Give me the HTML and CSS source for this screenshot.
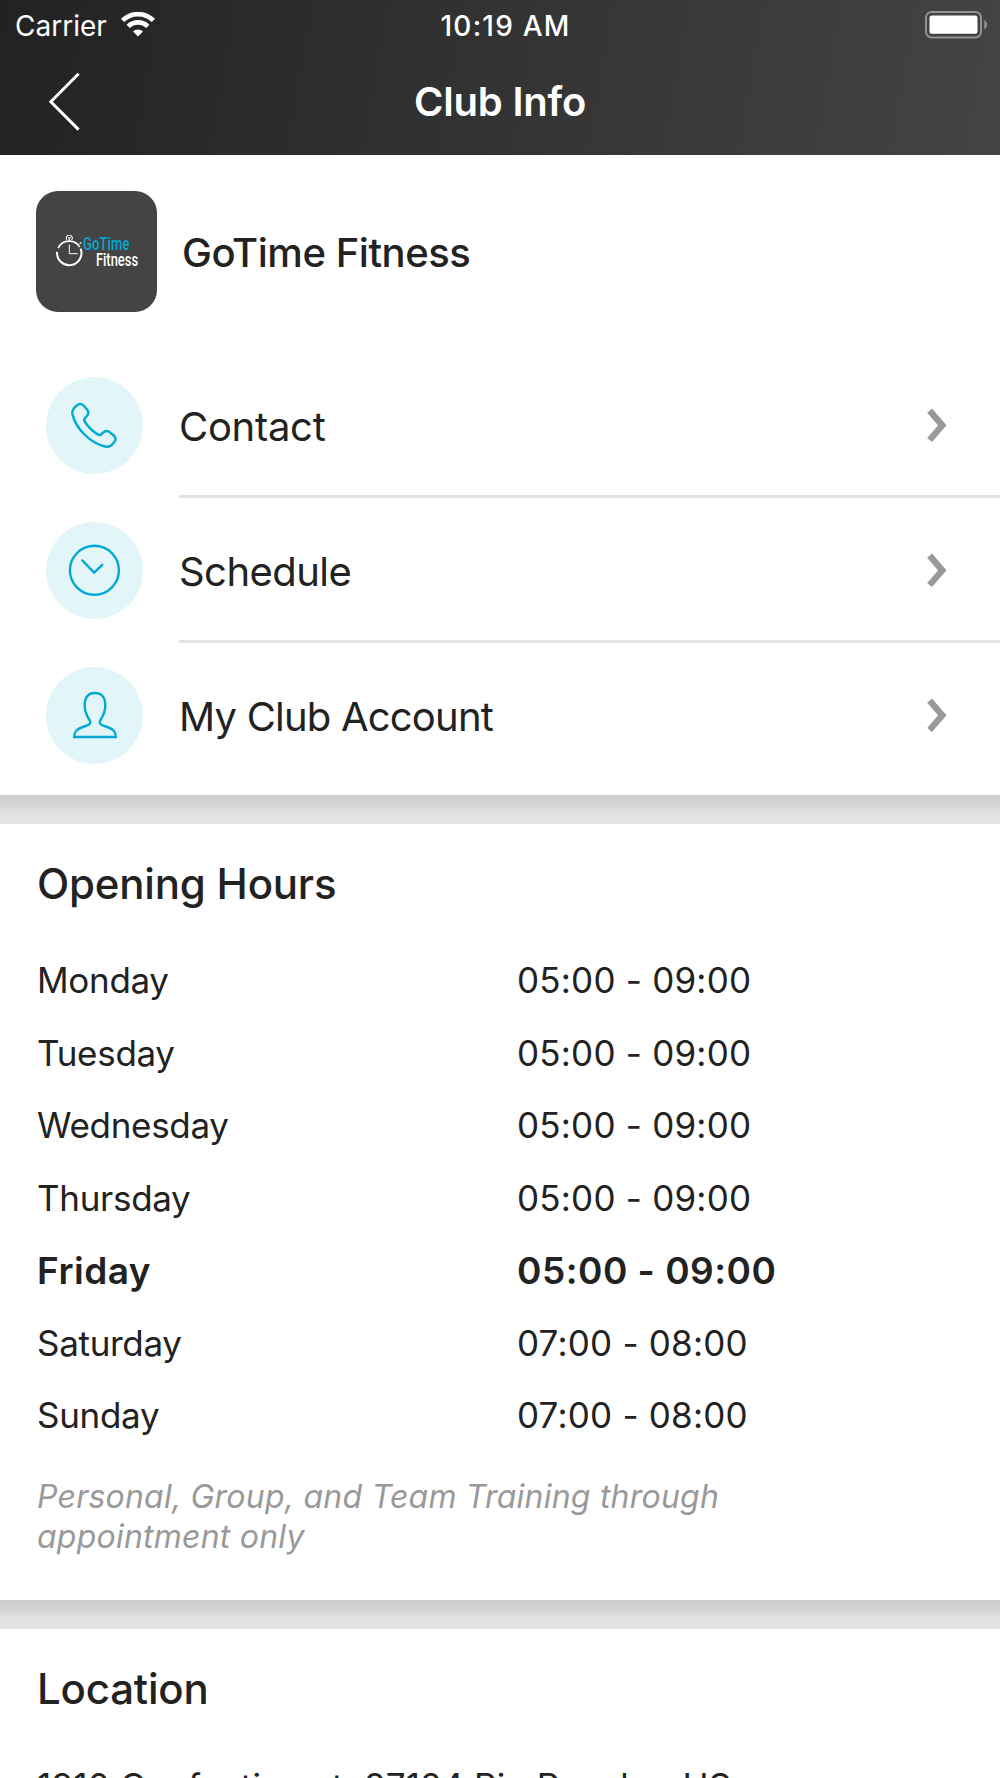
FILE: index.html
```html
<!DOCTYPE html>
<html lang="en">
<head>
  <meta charset="UTF-8">
  <meta name="viewport" content="width=device-width, initial-scale=1.0">
  <title>Club Info</title>
  <link rel="stylesheet" href="styles.css">
</head>
<body>
  <header class="header">
    <div class="status-bar">
      <div class="carrier">
        <span class="carrier-name">Carrier</span>
        <svg class="wifi" width="34" height="25" viewBox="0 0 34 25" fill="none" stroke="#fff">
          <path d="M1.6 8.4a22 22 0 0 1 30.8 0" stroke-width="4.6"/>
          <path d="M7.2 14.4a14 14 0 0 1 19.6 0" stroke-width="4.6"/>
          <path d="M17 24.6l-5-5.2a7.2 7.2 0 0 1 10 0z" fill="#fff" stroke="none"/>
        </svg>
      </div>
      <div class="time">10:19 AM</div>
      <svg class="battery" width="64" height="28" viewBox="0 0 64 28">
        <rect x="1" y="1" width="55" height="25.4" rx="5.5" fill="none" stroke="#929292" stroke-width="2"/>
        <rect x="4.5" y="4.4" width="48" height="18.4" rx="2.6" fill="#fff"/>
        <path d="M59.3 8.8a5.8 5.8 0 0 1 0 9.8z" fill="#929292"/>
      </svg>
    </div>
    <div class="nav-bar">
      <a class="back" href="#" aria-label="Back">
        <svg width="32" height="60" viewBox="0 0 32 60" fill="none" stroke="#fff" stroke-width="3">
          <path d="M29.6 1.8L1.8 29.7l27.8 27.9"/>
        </svg>
      </a>
      <h1>Club Info</h1>
    </div>
  </header>

  <section class="card club">
    <div class="club-head">
      <div class="logo">
        <svg class="stopwatch" width="28" height="33" viewBox="0 0 28 33" fill="none" stroke="#fff">
          <path d="M3.2 13.1A12.2 12.2 0 0 1 24.7 12" stroke-width="1.6"/>
          <path d="M25.6 13.6A12.2 12.2 0 1 1 2.1 16.8" stroke-width="2"/>
          <path d="M14.3 9.5v9.2h8.5" stroke-width="1"/>
          <path d="M12 4.8a2.9 2.9 0 1 1 4.6 0M13 2.8h2.6M14.3 3v3M24.6 9l1.8-1.6" stroke-width="1.1"/>
        </svg>
        <div class="logo-text">
          <span class="logo-top">GoTime</span>
          <span class="logo-bottom">Fitness</span>
        </div>
      </div>
      <h2 class="club-name">GoTime Fitness</h2>
    </div>

    <ul class="menu">
      <li class="menu-item">
        <span class="menu-icon">
          <svg width="56" height="56" viewBox="-0.4 -2 56 56">
            <path d="M6.6 8.2l2.6-2.5c2.2-2.2 5.4-2.2 7.4.2l3 3.7c1.9 2.3 1.7 4.6-.2 6.6l-1.6 1.6c-1.3 1.3-1.3 2.5-.2 4.2 3.1 4.7 7.6 9.2 12.7 12.4 1.5.9 2.7.7 3.9-.4l1.5-1.4c2.1-1.900 4.600-2.100 6.900-.2l3.700 3.100c2.300 1.900 2.400 4.900.3 7l-2.500 2.600c-1.700 1.700-3.800 2-6.400 1.400C22.700 43.100 8.500 28.400 5.200 14.900c-.7-2.800-.3-4.800 1.400-6.700z"/>
          </svg>
        </span>
        <span class="menu-label contact">Contact</span>
        <svg class="chevron" width="20" height="35" viewBox="0 0 20 35"><path d="M2.600 2.600l12.700 14.700L2.600 32"/></svg>
      </li>
      <li class="menu-item">
        <span class="menu-icon">
          <svg width="56" height="56" viewBox="0 0 56 56">
            <circle cx="27.400" cy="27.300" r="24.500"/>
            <path d="M15.300 17.400l11.800 12.200 8.200-7.800" stroke-linecap="round"/>
          </svg>
        </span>
        <span class="menu-label schedule">Schedule</span>
        <svg class="chevron" width="20" height="35" viewBox="0 0 20 35"><path d="M2.600 2.600l12.700 14.700L2.600 32"/></svg>
      </li>
      <li class="menu-item">
        <span class="menu-icon">
          <svg width="56" height="56" viewBox="0.6 1 56 56">
            <path d="M7.800 50h41.600c0-5.200-1.900-7.500-7.300-9.500l-5.700-2.100c-3.300-1.300-3.900-3.100-2.300-5.400 3-4.500 4.800-8.900 4.800-14.500 0-8.200-3.500-12.500-10.300-12.500s-10.300 4.300-10.300 12.500c0 5.600 1.800 10 4.800 14.500 1.600 2.300 1 4.100-2.300 5.400l-5.700 2.100C9.700 42.500 7.800 44.800 7.800 50z"/>
          </svg>
        </span>
        <span class="menu-label account">My Club Account</span>
        <svg class="chevron" width="20" height="35" viewBox="0 0 20 35"><path d="M2.600 2.600l12.700 14.700L2.600 32"/></svg>
      </li>
    </ul>
  </section>

  <div class="divider"></div>

  <section class="card hours">
    <h2 class="section-title">Opening Hours</h2>
    <dl class="hours-list">
      <dt>Monday</dt><dd>05:00 - 09:00</dd>
      <dt>Tuesday</dt><dd>05:00 - 09:00</dd>
      <dt>Wednesday</dt><dd>05:00 - 09:00</dd>
      <dt>Thursday</dt><dd>05:00 - 09:00</dd>
      <dt class="today">Friday</dt><dd class="today">05:00 - 09:00</dd>
      <dt>Saturday</dt><dd>07:00 - 08:00</dd>
      <dt>Sunday</dt><dd>07:00 - 08:00</dd>
    </dl>
    <p class="note">Personal, Group, and Team Training through appointment only</p>
  </section>

  <div class="divider"></div>

  <section class="card location">
    <h2 class="section-title">Location</h2>
    <p class="address">1910 Confection st, 87124 Rio Rancho, US</p>
  </section>
</body>
</html>
```

FILE: styles.css
```css
* {
  box-sizing: border-box;
  margin: 0;
  padding: 0;
}

body {
  width: 1000px;
  height: 1778px;
  overflow: hidden;
  font-family: 'Inter', 'Liberation Sans', sans-serif;
  background: #fff;
  color: #222;
}

/* Header */
.header {
  height: 155px;
  background: linear-gradient(100deg, #222 0%, #444 100%);
  color: #fff;
}

.status-bar {
  display: grid;
  grid-template-columns: 1fr auto 1fr;
  align-items: center;
  height: 50px;
  padding: 1px 11px 0 15px;
  font-size: 28px;
}

.carrier {
  display: flex;
  align-items: center;
  gap: 14px;
}

.wifi {
  margin-bottom: 3px;
}

.time {
  padding-left: 7px;
  font-weight: 500;
  letter-spacing: 1.2px;
}

.battery {
  justify-self: end;
  margin-bottom: 1px;
}

.nav-bar {
  display: grid;
  grid-template-columns: 120px 1fr 120px;
  align-items: center;
  height: 103px;
}

.back {
  display: flex;
  padding-left: 49px;
}

h1 {
  text-align: center;
  font-size: 40px;
  font-weight: 600;
  letter-spacing: -0.2px;
}

/* Cards */
.card {
  background: #fff;
}

.divider {
  height: 29px;
  background: linear-gradient(#cdcdcd, #d3d3d3 30%, #e1e1e1 60%, #e5e5e5);
}

.club {
  height: 640px;
  padding-top: 36px;
}

.club-head {
  display: flex;
  align-items: center;
  gap: 25px;
  padding-left: 36px;
}

.logo {
  display: flex;
  align-items: center;
  width: 121px;
  height: 121px;
  padding-left: 19px;
  border-radius: 22px;
  background: #444;
}

.stopwatch {
  flex: none;
}

.logo-text {
  display: flex;
  flex-direction: column;
  width: 55px;
  font-family: 'Roboto', sans-serif;
  font-size: 19px;
  font-weight: 500;
  line-height: 16px;
  transform: scaleX(0.68);
  transform-origin: left;
}

.logo-top {
  color: #00a9d4;
  letter-spacing: 0.3px;
}

.logo-bottom {
  padding-left: 19px;
  color: #fff;
}

.club-name {
  padding-top: 1px;
  font-size: 40px;
  font-weight: 500;
  letter-spacing: -0.45px;
}

.menu {
  list-style: none;
  margin-top: 41px;
}

.menu-item {
  display: flex;
  align-items: center;
  height: 145px;
  padding: 0 53px 0 46px;
  background: linear-gradient(#e3e3e3, #e3e3e3) 179px 100% / 821px 3px no-repeat;
}

.menu-item:last-child {
  background: none;
}

.menu-icon {
  display: flex;
  align-items: center;
  justify-content: center;
  width: 97px;
  height: 97px;
  margin-right: 36px;
  border-radius: 50%;
  background: #e2f6fa;
  fill: none;
  stroke: #00a9d4;
  stroke-width: 2.4;
}

.menu-label {
  flex: 1;
  padding-top: 1px;
  font-size: 40px;
}

.contact {
  letter-spacing: -0.3px;
}

.schedule {
  letter-spacing: -0.55px;
}

.account {
  letter-spacing: -0.8px;
}

.chevron {
  fill: none;
  stroke: #999;
  stroke-width: 6.4;
}

/* Opening hours */
.hours,
.location {
  padding: 35px 37px 0;
}

.hours {
  height: 776px;
}

.section-title {
  font-size: 42px;
  font-weight: 500;
  line-height: 50px;
  letter-spacing: -0.2px;
}

.hours-list {
  display: grid;
  grid-template-columns: 480px 1fr;
  grid-auto-rows: 72.5px;
  align-items: center;
  margin-top: 35px;
  font-size: 35px;
}

.hours-list dt {
  letter-spacing: -0.3px;
}

.hours-list dd {
  letter-spacing: 0.22px;
}

.hours-list .today {
  font-size: 37px;
  font-weight: 600;
  letter-spacing: 0.5px;
}

.note {
  width: 740px;
  margin-top: 25px;
  font-size: 32px;
  font-style: italic;
  line-height: 40.5px;
  letter-spacing: 0.22px;
  color: #999;
}

/* Location */
.location {
  height: 200px;
}

.address {
  margin-top: 51px;
  font-size: 35px;
  letter-spacing: 0.2px;
  white-space: nowrap;
}
```
